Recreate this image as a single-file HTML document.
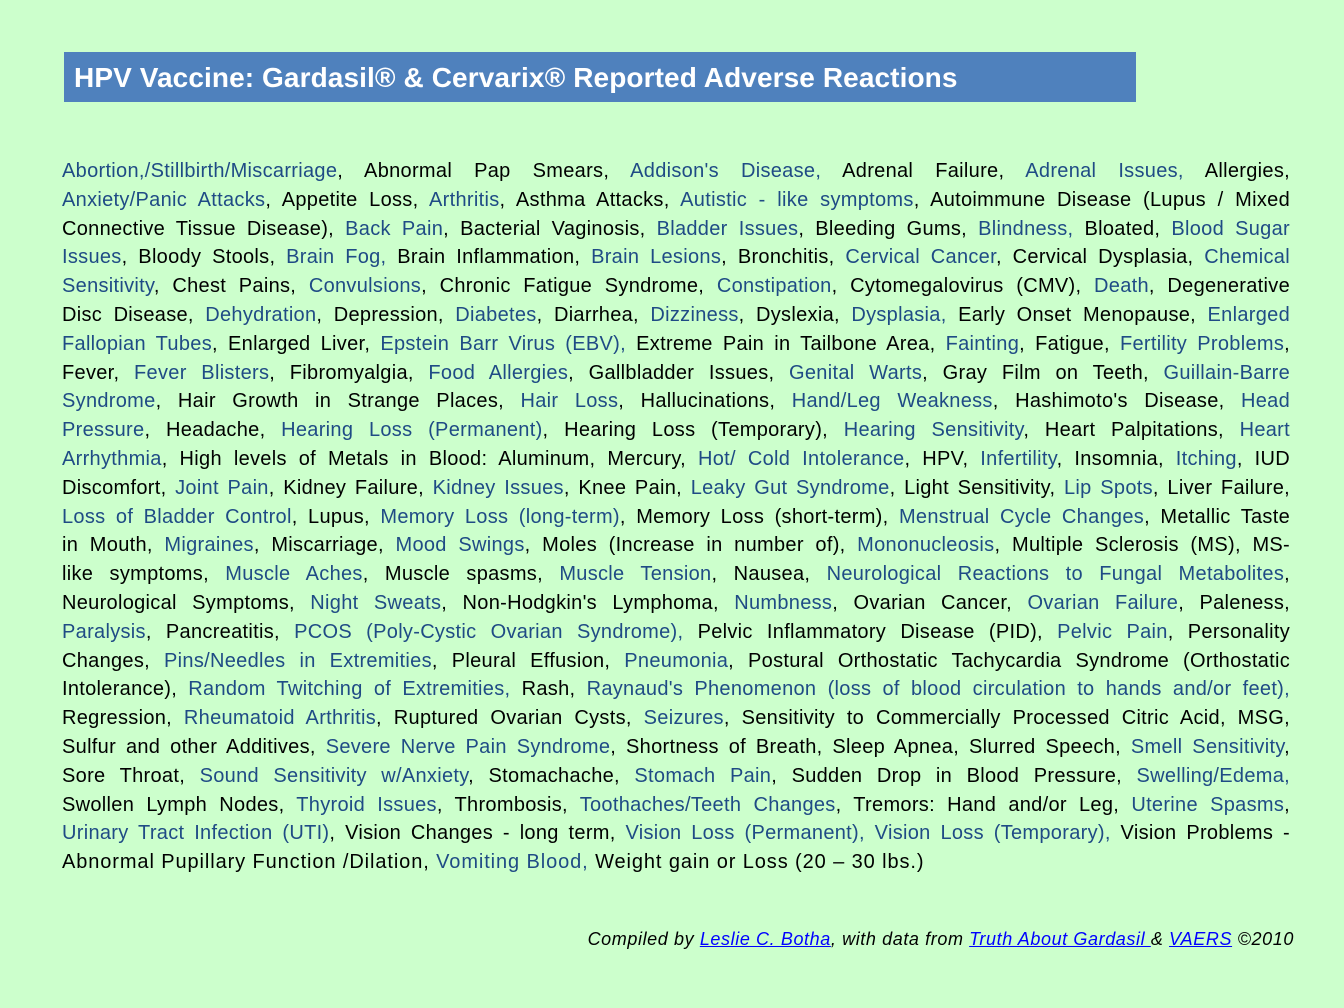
<!DOCTYPE html>
<html><head><meta charset="utf-8"><style>
body{margin:0;width:1344px;height:1008px;background:#ccffcc;font-family:"Liberation Sans",sans-serif;position:relative;overflow:hidden}
.h{position:absolute;left:64px;top:52px;width:1072px;height:50px;background:#4f81bd;color:#fff;font-weight:bold;font-size:28px;line-height:52px;box-sizing:border-box;padding-left:10px;letter-spacing:0.1px}
.t{position:absolute;left:62px;top:157px;width:1228px;font-size:20px;line-height:28.8px;color:#000}
.t div{white-space:nowrap;text-align:justify;text-align-last:justify;letter-spacing:0.3px}
.t div.l{text-align-last:left;letter-spacing:0.9px}
.b{color:#1f4b85}
.f{position:absolute;right:50px;top:929px;font-size:18px;font-style:italic;color:#000;letter-spacing:0.6px}
.f a{color:#0000ff;text-decoration:underline}
</style></head><body>
<div class="h">HPV Vaccine: Gardasil® &amp; Cervarix® Reported Adverse Reactions</div>
<div class="t">
<div><span class="b">Abortion,/Stillbirth/Miscarriage</span>, Abnormal Pap Smears, <span class="b">Addison's Disease,</span> Adrenal Failure, <span class="b">Adrenal Issues,</span> Allergies,</div>
<div><span class="b">Anxiety/Panic Attacks</span>, Appetite Loss, <span class="b">Arthritis</span>, Asthma Attacks, <span class="b">Autistic - like symptoms</span>, Autoimmune Disease (Lupus / Mixed</div>
<div>Connective Tissue Disease), <span class="b">Back Pain</span>, Bacterial Vaginosis, <span class="b">Bladder Issues</span>, Bleeding Gums, <span class="b">Blindness,</span> Bloated, <span class="b">Blood Sugar</span></div>
<div><span class="b">Issues</span>, Bloody Stools, <span class="b">Brain Fog,</span> Brain Inflammation, <span class="b">Brain Lesions</span>, Bronchitis, <span class="b">Cervical Cancer</span>, Cervical Dysplasia, <span class="b">Chemical</span></div>
<div><span class="b">Sensitivity</span>, Chest Pains, <span class="b">Convulsions</span>, Chronic Fatigue Syndrome, <span class="b">Constipation</span>, Cytomegalovirus (CMV), <span class="b">Death</span>, Degenerative</div>
<div>Disc Disease, <span class="b">Dehydration</span>, Depression, <span class="b">Diabetes</span>, Diarrhea, <span class="b">Dizziness</span>, Dyslexia, <span class="b">Dysplasia,</span> Early Onset Menopause, <span class="b">Enlarged</span></div>
<div><span class="b">Fallopian Tubes</span>, Enlarged Liver, <span class="b">Epstein Barr Virus (EBV),</span> Extreme Pain in Tailbone Area, <span class="b">Fainting</span>, Fatigue, <span class="b">Fertility Problems</span>,</div>
<div>Fever, <span class="b">Fever Blisters</span>, Fibromyalgia, <span class="b">Food Allergies</span>, Gallbladder Issues, <span class="b">Genital Warts</span>, Gray Film on Teeth, <span class="b">Guillain-Barre</span></div>
<div><span class="b">Syndrome</span>, Hair Growth in Strange Places, <span class="b">Hair Loss</span>, Hallucinations, <span class="b">Hand/Leg Weakness</span>, Hashimoto's Disease, <span class="b">Head</span></div>
<div><span class="b">Pressure</span>, Headache, <span class="b">Hearing Loss (Permanent)</span>, Hearing Loss (Temporary), <span class="b">Hearing Sensitivity</span>, Heart Palpitations, <span class="b">Heart</span></div>
<div><span class="b">Arrhythmia</span>, High levels of Metals in Blood: Aluminum, Mercury, <span class="b">Hot/ Cold Intolerance</span>, HPV, <span class="b">Infertility</span>, Insomnia, <span class="b">Itching</span>, IUD</div>
<div>Discomfort, <span class="b">Joint Pain</span>, Kidney Failure, <span class="b">Kidney Issues</span>, Knee Pain, <span class="b">Leaky Gut Syndrome</span>, Light Sensitivity, <span class="b">Lip Spots</span>, Liver Failure,</div>
<div><span class="b">Loss of Bladder Control</span>, Lupus, <span class="b">Memory Loss (long-term)</span>, Memory Loss (short-term), <span class="b">Menstrual Cycle Changes</span>, Metallic Taste</div>
<div>in Mouth, <span class="b">Migraines</span>, Miscarriage, <span class="b">Mood Swings</span>, Moles (Increase in number of), <span class="b">Mononucleosis</span>, Multiple Sclerosis (MS), MS-</div>
<div>like symptoms, <span class="b">Muscle Aches</span>, Muscle spasms, <span class="b">Muscle Tension</span>, Nausea, <span class="b">Neurological Reactions to Fungal Metabolites</span>,</div>
<div>Neurological Symptoms, <span class="b">Night Sweats</span>, Non-Hodgkin's Lymphoma, <span class="b">Numbness</span>, Ovarian Cancer, <span class="b">Ovarian Failure</span>, Paleness,</div>
<div><span class="b">Paralysis</span>, Pancreatitis, <span class="b">PCOS (Poly-Cystic Ovarian Syndrome),</span> Pelvic Inflammatory Disease (PID), <span class="b">Pelvic Pain</span>, Personality</div>
<div>Changes, <span class="b">Pins/Needles in Extremities</span>, Pleural Effusion, <span class="b">Pneumonia</span>, Postural Orthostatic Tachycardia Syndrome (Orthostatic</div>
<div>Intolerance), <span class="b">Random Twitching of Extremities,</span> Rash, <span class="b">Raynaud's Phenomenon (loss of blood circulation to hands and/or feet),</span></div>
<div>Regression, <span class="b">Rheumatoid Arthritis</span>, Ruptured Ovarian Cysts, <span class="b">Seizures</span>, Sensitivity to Commercially Processed Citric Acid, MSG,</div>
<div>Sulfur and other Additives, <span class="b">Severe Nerve Pain Syndrome</span>, Shortness of Breath, Sleep Apnea, Slurred Speech, <span class="b">Smell Sensitivity</span>,</div>
<div>Sore Throat, <span class="b">Sound Sensitivity w/Anxiety</span>, Stomachache, <span class="b">Stomach Pain</span>, Sudden Drop in Blood Pressure, <span class="b">Swelling/Edema,</span></div>
<div>Swollen Lymph Nodes, <span class="b">Thyroid Issues</span>, Thrombosis, <span class="b">Toothaches/Teeth Changes</span>, Tremors: Hand and/or Leg, <span class="b">Uterine Spasms</span>,</div>
<div><span class="b">Urinary Tract Infection (UTI)</span>, Vision Changes - long term, <span class="b">Vision Loss (Permanent), Vision Loss (Temporary),</span> Vision Problems -</div>
<div class="l">Abnormal Pupillary Function /Dilation, <span class="b">Vomiting Blood,</span> Weight gain or Loss (20 – 30 lbs.)</div>
</div>
<div class="f">Compiled by <a>Leslie C. Botha</a>, with data from <a>Truth About Gardasil </a>&amp; <a>VAERS</a> ©2010</div>
</body></html>
